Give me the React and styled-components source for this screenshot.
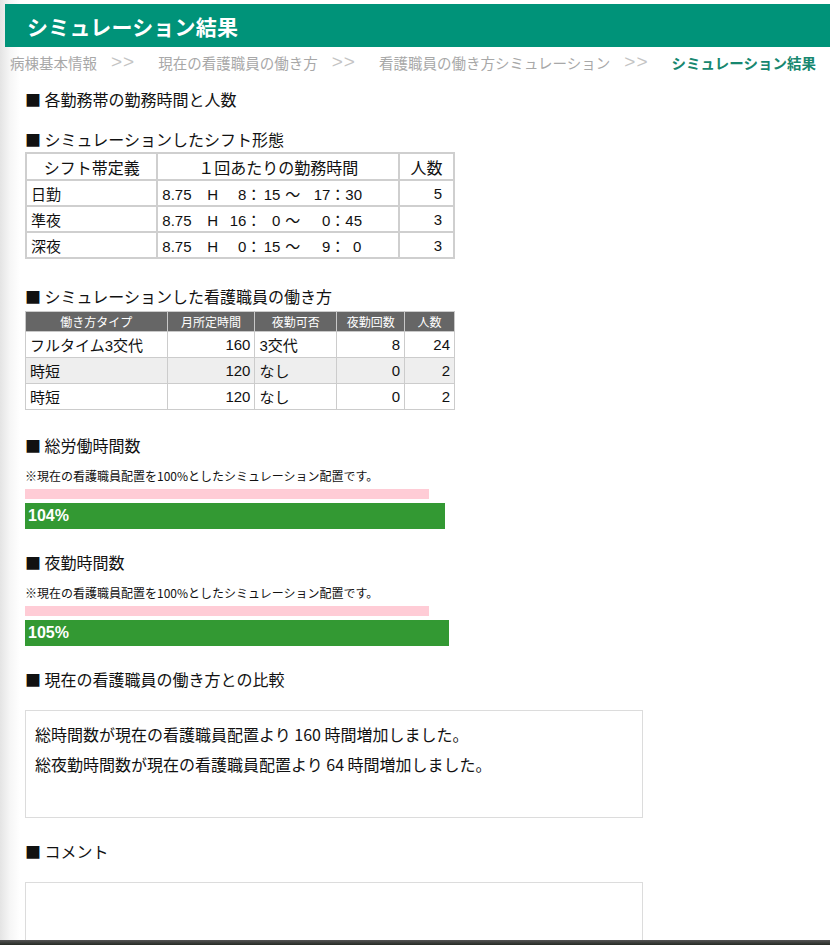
import React from 'react';
import styled, { createGlobalStyle } from 'styled-components';

const GlobalStyle = createGlobalStyle`
  html, body {
    margin: 0;
    padding: 0;
  }
  body {
    background: linear-gradient(to right, #e4e4e4 0, #f6f6f6 10px, #fff 20px);
    font-family: "Noto Sans CJK JP", "Liberation Sans", sans-serif;
    color: #111;
  }
`;

const Page = styled.div`
  padding: 4px 0 40px 5px;
  min-height: 945px;
  box-sizing: border-box;
`;

const TitleBar = styled.h1`
  margin: 0;
  height: 43px;
  display: flex;
  align-items: center;
  padding-left: 22px;
  background: #009379;
  color: #fff;
  font-size: 21px;
  font-weight: bold;
  letter-spacing: 0.2px;
`;

const Crumbs = styled.nav`
  display: flex;
  align-items: center;
  height: 24px;
  margin-top: 3px;
  padding-left: 5px;
  font-size: 14.5px;
  white-space: nowrap;
`;

const Crumb = styled.span`
  color: ${p => (p.$active ? '#17876f' : '#a8a8a8')};
  font-weight: ${p => (p.$active ? 'bold' : 'normal')};
`;

const Sep = styled.span`
  color: #c4c4c4;
  font-family: "Liberation Sans", sans-serif;
  font-size: 19px;
  letter-spacing: 1px;
  margin: 0 23px 0 14px;
`;

const Content = styled.main`
  padding-left: 20px;
`;

const Heading = styled.h2`
  margin: ${p => p.$top || 0}px 0 ${p => p.$bottom || 0}px;
  font-size: 16px;
  font-weight: normal;
  line-height: 20px;
  color: #111;
`;

const ShiftTable = styled.table`
  border-collapse: collapse;
  width: 430px;
  border: 2px solid #cfcfcf;
  font-family: "Liberation Sans", "Noto Sans CJK JP", sans-serif;
  font-size: 15px;

  th, td {
    border: 2px solid #cfcfcf;
    padding: 0 4px;
    height: 24px;
  }
  th {
    font-family: "Noto Sans CJK JP", sans-serif;
    font-size: 16px;
    font-weight: normal;
    height: 25px;
  }
`;

const NumCell = styled.td`
  text-align: right;
  && { padding-right: ${p => p.$pr || 4}px; }
`;

const TimeBox = styled.span`
  display: inline-block;
  width: ${p => p.$w}px;
  text-align: ${p => p.$align || 'right'};
`;

const WorkTable = styled.table`
  border-collapse: collapse;
  width: 430px;
  border: 1px solid #cccccc;
  font-family: "Liberation Sans", "Noto Sans CJK JP", sans-serif;
  font-size: 15px;

  th {
    background: #666;
    color: #fff;
    font-family: "Noto Sans CJK JP", sans-serif;
    font-size: 12px;
    font-weight: normal;
    height: 19px;
    padding: 0;
    border: 1px solid #c8c8c8;
    border-top: none;
  }
  td {
    border: 1px solid #cccccc;
    height: 25px;
    padding: 0 4px;
  }
`;

const WorkRow = styled.tr`
  background: ${p => (p.$shade ? '#eeeeee' : '#fff')};
`;

const Note = styled.p`
  margin: 13px 0 0;
  font-size: 12px;
  line-height: 16px;
  color: #111;
`;

const BaseBar = styled.div`
  width: 404px;
  height: 10px;
  margin-top: 5px;
  background: #ffccd6;
`;

const RatioBar = styled.div`
  height: 26px;
  margin-top: 4px;
  background: #339933;
  color: #fff;
  font-family: "Liberation Sans", sans-serif;
  font-size: 16px;
  font-weight: bold;
  line-height: 26px;
  padding-left: 3px;
  box-sizing: border-box;
`;

const MessageBox = styled.div`
  width: 618px;
  height: 108px;
  margin-top: 21px;
  box-sizing: border-box;
  border: 1px solid #dcdcdc;
  padding: 8px 9px;
  font-size: 16px;
  line-height: 30px;
  background: #fff;
`;

const Footer = styled.div`
  position: fixed;
  left: 0;
  right: 0;
  bottom: 0;
  height: 5px;
  background: linear-gradient(#555, #262a24);
`;

const shifts = [
  { name: '日勤', h: '8', m: '15', eh: '17', em: '30', n: 5 },
  { name: '準夜', h: '16', m: '0', eh: '0', em: '45', n: 3 },
  { name: '深夜', h: '0', m: '15', eh: '9', em: '0', n: 3 },
];

const workers = [
  { type: 'フルタイム3交代', hours: 160, night: '3交代', count: 8, n: 24 },
  { type: '時短', hours: 120, night: 'なし', count: 0, n: 2 },
  { type: '時短', hours: 120, night: 'なし', count: 0, n: 2 },
];

const BASE = 404;

const Ratio = ({ pct }) => (
  <>
    <BaseBar />
    <RatioBar style={{ width: Math.round((BASE * pct) / 100) }}>{pct}%</RatioBar>
  </>
);

const App = () => (
  <Page>
    <GlobalStyle />
    <TitleBar>シミュレーション結果</TitleBar>
    <Crumbs>
      <Crumb>病棟基本情報</Crumb>
      <Sep>&gt;&gt;</Sep>
      <Crumb>現在の看護職員の働き方</Crumb>
      <Sep>&gt;&gt;</Sep>
      <Crumb>看護職員の働き方シミュレーション</Crumb>
      <Sep>&gt;&gt;</Sep>
      <Crumb $active>シミュレーション結果</Crumb>
    </Crumbs>

    <Content>
      <Heading $top={15}>■ 各勤務帯の勤務時間と人数</Heading>

      <Heading $top={20} $bottom={3}>■ シミュレーションしたシフト形態</Heading>
      <ShiftTable>
        <colgroup>
          <col style={{ width: 132 }} />
          <col style={{ width: 243 }} />
          <col style={{ width: 55 }} />
        </colgroup>
        <thead>
          <tr>
            <th>シフト帯定義</th>
            <th>１回あたりの勤務時間</th>
            <th>人数</th>
          </tr>
        </thead>
        <tbody>
          {shifts.map(s => (
            <tr key={s.name}>
              <td>{s.name}</td>
              <td>
                <TimeBox $w={45} $align="left">8.75</TimeBox>
                <TimeBox $w={11} $align="left">H</TimeBox>
                <TimeBox $w={28}>{s.h}</TimeBox>
                <TimeBox $w={15} $align="center">：</TimeBox>
                <TimeBox $w={19}>{s.m}</TimeBox>
                <TimeBox $w={25} $align="center">〜</TimeBox>
                <TimeBox $w={25}>{s.eh}</TimeBox>
                <TimeBox $w={15} $align="center">：</TimeBox>
                <TimeBox $w={16}>{s.em}</TimeBox>
              </td>
              <NumCell $pr={11}>{s.n}</NumCell>
            </tr>
          ))}
        </tbody>
      </ShiftTable>

      <Heading $top={27} $bottom={5}>■ シミュレーションした看護職員の働き方</Heading>
      <WorkTable>
        <colgroup>
          <col style={{ width: 142 }} />
          <col style={{ width: 88 }} />
          <col style={{ width: 82 }} />
          <col style={{ width: 68 }} />
          <col style={{ width: 50 }} />
        </colgroup>
        <thead>
          <tr>
            <th>働き方タイプ</th>
            <th>月所定時間</th>
            <th>夜勤可否</th>
            <th>夜勤回数</th>
            <th>人数</th>
          </tr>
        </thead>
        <tbody>
          {workers.map((w, i) => (
            <WorkRow key={i} $shade={i === 1}>
              <td>{w.type}</td>
              <NumCell>{w.hours}</NumCell>
              <td>{w.night}</td>
              <NumCell>{w.count}</NumCell>
              <NumCell>{w.n}</NumCell>
            </WorkRow>
          ))}
        </tbody>
      </WorkTable>

      <Heading $top={25}>■ 総労働時間数</Heading>
      <Note>※現在の看護職員配置を100%としたシミュレーション配置です。</Note>
      <Ratio pct={104} />

      <Heading $top={23}>■ 夜勤時間数</Heading>
      <Note>※現在の看護職員配置を100%としたシミュレーション配置です。</Note>
      <Ratio pct={105} />

      <Heading $top={23}>■ 現在の看護職員の働き方との比較</Heading>
      <MessageBox>
        総時間数が現在の看護職員配置より 160 時間増加しました。
        <br />
        総夜勤時間数が現在の看護職員配置より 64 時間増加しました。
      </MessageBox>

      <Heading $top={23}>■ コメント</Heading>
      <MessageBox />
    </Content>
    <Footer />
  </Page>
);

export default App;
